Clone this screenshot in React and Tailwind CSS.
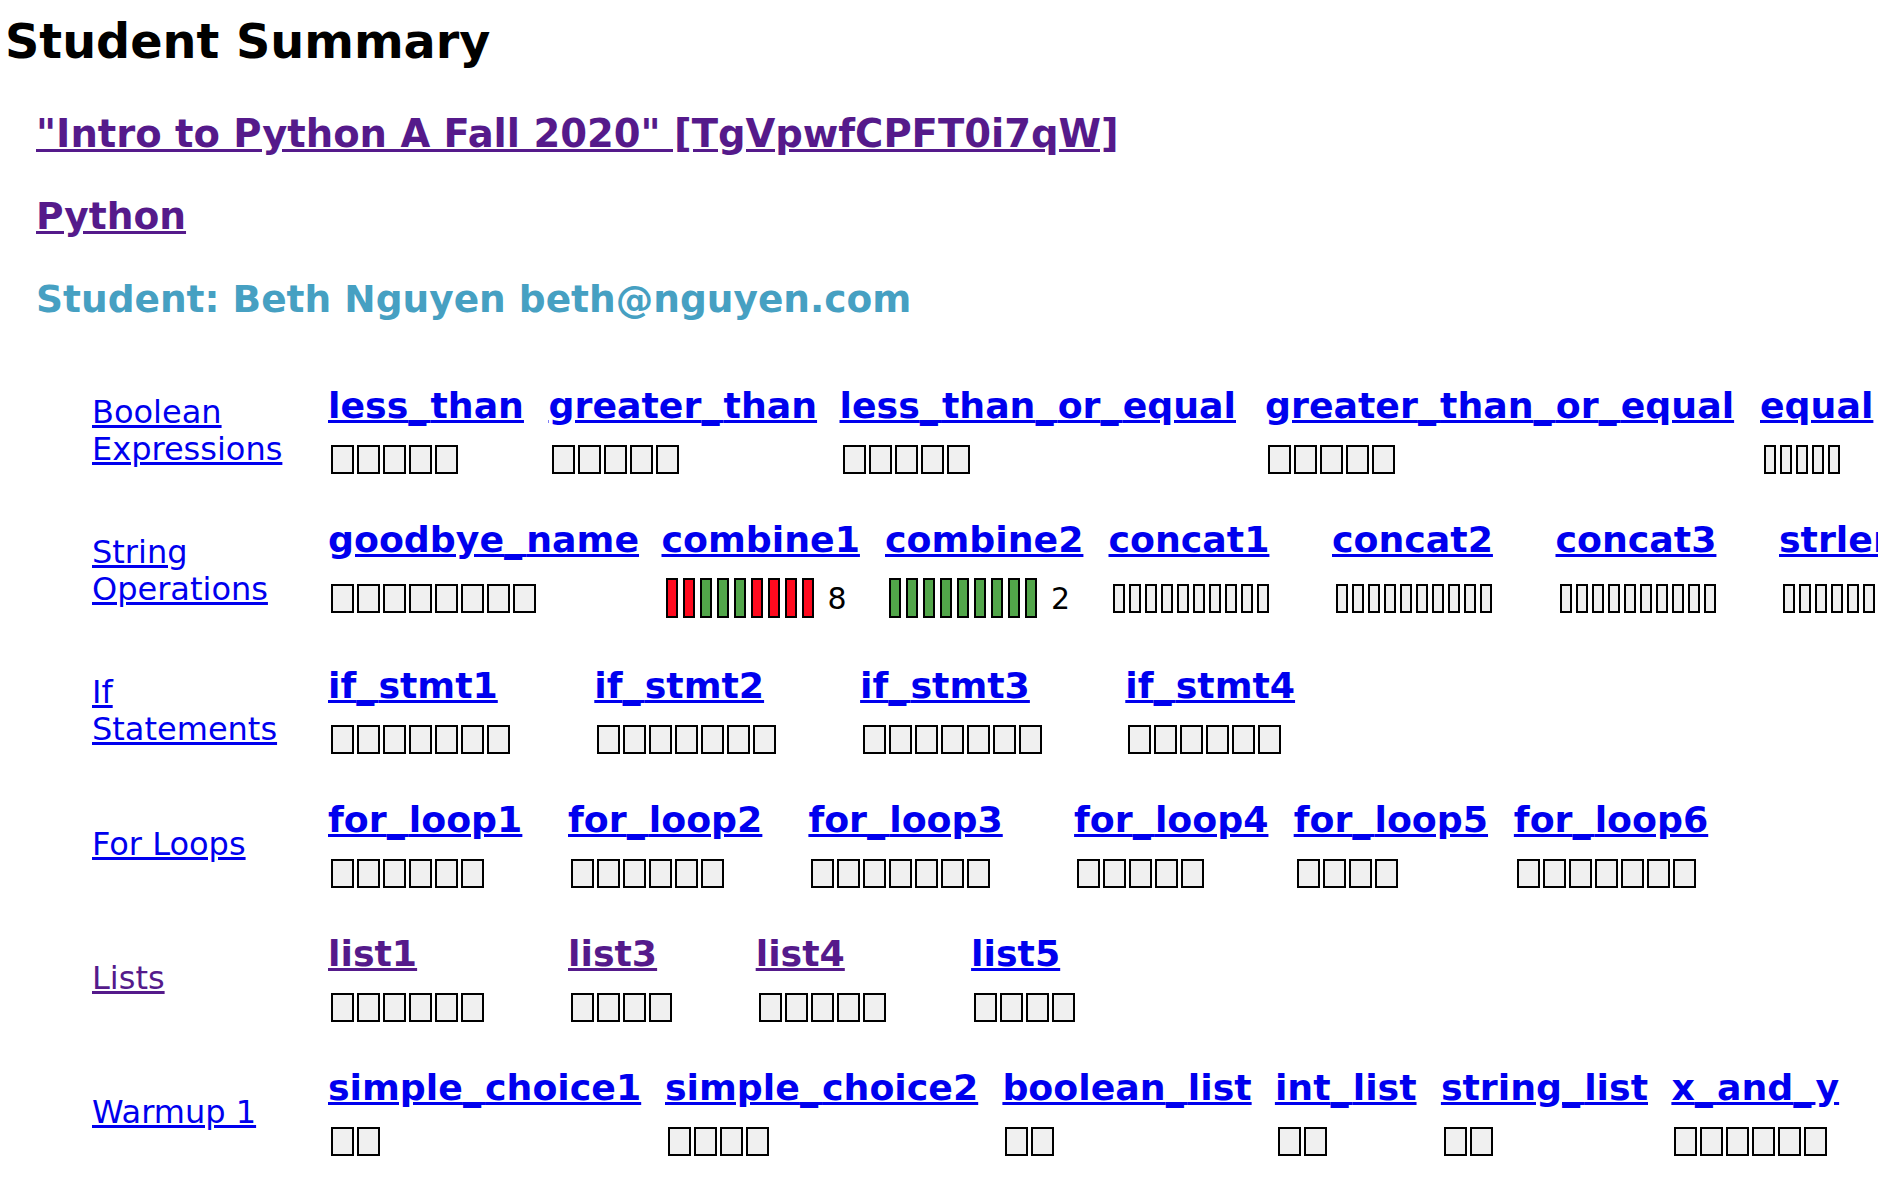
import React from "react";

const BLUE = "text-[#0000ee]";
const PURPLE = "text-[#551a8b]";

const rows = [
  {
    label: "Boolean Expressions",
    labelColor: BLUE,
    tall: false,
    items: [
      { name: "less_than", w: "w-[220.5px]", cells: "ggggg" },
      { name: "greater_than", w: "w-[291px]", cells: "ggggg" },
      { name: "less_than_or_equal", w: "w-[425.5px]", cells: "ggggg" },
      { name: "greater_than_or_equal", w: "w-[495px]", cells: "ggggg" },
      { name: "equal", w: "", cells: "nnnnn" },
    ],
  },
  {
    label: "String Operations",
    labelColor: BLUE,
    tall: true,
    items: [
      { name: "goodbye_name", w: "w-[333.5px]", cells: "gggggggg" },
      { name: "combine1", w: "w-[223.5px]", cells: "RRGGGRRRR", count: "8" },
      { name: "combine2", w: "w-[223.5px]", cells: "GGGGGGGGG", count: "2" },
      { name: "concat1", w: "w-[223.5px]", cells: "nnnnnnnnnn" },
      { name: "concat2", w: "w-[223.5px]", cells: "nnnnnnnnnn" },
      { name: "concat3", w: "w-[223.5px]", cells: "nnnnnnnnnn" },
      { name: "strlen1", w: "", cells: "nnnnnnnnnn" },
    ],
  },
  {
    label: "If Statements",
    labelColor: BLUE,
    tall: false,
    items: [
      { name: "if_stmt1", w: "w-[266.3px]", cells: "ggggggg" },
      { name: "if_stmt2", w: "w-[265.8px]", cells: "ggggggg" },
      { name: "if_stmt3", w: "w-[265.2px]", cells: "ggggggg" },
      { name: "if_stmt4", w: "", cells: "gggggg" },
    ],
  },
  {
    label: "For Loops",
    labelColor: BLUE,
    tall: false,
    items: [
      { name: "for_loop1", w: "w-[240px]", cells: "gggggg" },
      { name: "for_loop2", w: "w-[240.4px]", cells: "gggggg" },
      { name: "for_loop3", w: "w-[265.7px]", cells: "ggggggg" },
      { name: "for_loop4", w: "w-[219.6px]", cells: "ggggg" },
      { name: "for_loop5", w: "w-[220.2px]", cells: "gggg" },
      { name: "for_loop6", w: "", cells: "ggggggg" },
    ],
  },
  {
    label: "Lists",
    labelColor: PURPLE,
    tall: false,
    items: [
      { name: "list1", w: "w-[240px]", cells: "gggggg", visited: true },
      { name: "list3", w: "w-[187.7px]", cells: "gggg", visited: true },
      { name: "list4", w: "w-[215.4px]", cells: "ggggg", visited: true },
      { name: "list5", w: "", cells: "gggg" },
    ],
  },
  {
    label: "Warmup 1",
    labelColor: BLUE,
    tall: false,
    items: [
      { name: "simple_choice1", w: "w-[337px]", cells: "gg" },
      { name: "simple_choice2", w: "w-[337.4px]", cells: "gggg" },
      { name: "boolean_list", w: "w-[272.5px]", cells: "gg" },
      { name: "int_list", w: "w-[166px]", cells: "gg" },
      { name: "string_list", w: "w-[230.5px]", cells: "gg" },
      { name: "x_and_y", w: "", cells: "gggggg" },
    ],
  },
];

function Cell({ kind }) {
  if (kind === "g")
    return <span className="block w-[23px] h-[29px] border-2 border-black bg-[#f0f0f0]" />;
  if (kind === "n")
    return <span className="block w-[12px] h-[29px] border-2 border-black bg-[#f0f0f0]" />;
  if (kind === "R")
    return <span className="block w-[12px] h-[40px] border-2 border-black bg-[#ff0a1e]" />;
  return <span className="block w-[12px] h-[40px] border-2 border-black bg-[#52a64a]" />;
}

function Name({ text }) {
  const parts = text.split("_");
  return (
    <>
      {parts.map((p, i) => (
        <React.Fragment key={i}>
          {i > 0 && <span className="tracking-[4px]">_</span>}
          {p}
        </React.Fragment>
      ))}
    </>
  );
}

function Item({ item, tall }) {
  const kinds = item.cells.split("");
  const first = kinds[0];
  const gapClass =
    first === "g"
      ? "gap-[3px] pl-[3px]"
      : first === "n"
      ? "gap-[4px] pl-[4px]"
      : "gap-[5px] pl-[4px]";
  return (
    <div
      className={
        "shrink-0 flex flex-col items-start " +
        item.w +
        (tall ? " pb-[5px]" : " pb-[3px]")
      }
    >
      <a
        href="#"
        className={
          "text-[36.3px] font-bold leading-[42px] underline whitespace-nowrap " +
          (item.visited ? PURPLE : BLUE)
        }
      >
        <Name text={item.name} />
      </a>
      <div
        className={
          "flex items-center " +
          gapClass +
          (tall ? " mt-[17.5px] h-[40px]" : " mt-[17.5px] h-[30px]")
        }
      >
        {kinds.map((k, i) => (
          <Cell key={i} kind={k} />
        ))}
        {item.count && (
          <span className="ml-[9px] text-[30px] leading-[35px] font-normal text-black">
            {item.count}
          </span>
        )}
      </div>
    </div>
  );
}

export default function App() {
  return (
    <div className="font-['DejaVu_Sans',sans-serif] bg-white text-black overflow-hidden min-h-screen">
      <h1 className="pl-[5px] pt-[14px] text-[47.7px] font-bold leading-[56px] whitespace-nowrap">
        Student Summary
      </h1>
      <div className="pl-[36px] flex flex-col items-start font-bold leading-[44px] whitespace-nowrap">
        <a href="#" className={"mt-[41.5px] text-[38.5px] underline " + PURPLE}>
          "Intro to Python A Fall 2020" [TgVpwfCPFT0i7qW]
        </a>
        <a href="#" className={"mt-[38.5px] text-[37.6px] underline " + PURPLE}>
          Python
        </a>
        <div className="mt-[39px] text-[37.5px] text-[#46a0c2]">
          Student: Beth Nguyen beth@nguyen.com
        </div>
      </div>
      <div className="mt-[63.5px] flex flex-col gap-[41.5px]">
        {rows.map((row) => (
          <div key={row.label} className="flex items-center pl-[92px]">
            <div className="w-[236px] shrink-0 pr-[36px] text-[32px] leading-[37px]">
              <a href="#" className={"underline " + row.labelColor}>
                {row.label}
              </a>
            </div>
            <div className="flex items-start">
              {row.items.map((item) => (
                <Item key={item.name} item={item} tall={row.tall} />
              ))}
            </div>
          </div>
        ))}
      </div>
    </div>
  );
}
